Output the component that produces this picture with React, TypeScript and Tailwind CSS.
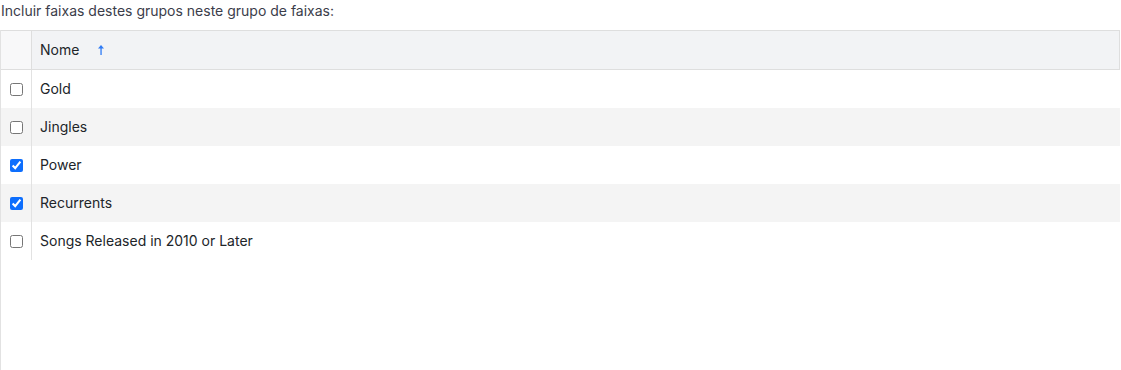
import { useState } from "react";

const groups = [
  { name: "Gold", checked: false },
  { name: "Jingles", checked: false },
  { name: "Power", checked: true },
  { name: "Recurrents", checked: true },
  { name: "Songs Released in 2010 or Later", checked: false },
];

function SortArrow() {
  return (
    <svg width="8" height="12" viewBox="0 0 8 12" className="ml-[18px]">
      <path d="M4 1 L7 4.5 H1 Z" fill="#2f7bf5" />
      <rect x="3.4" y="4" width="1.3" height="7" fill="#2f7bf5" />
    </svg>
  );
}

export default function App() {
  const [rows, setRows] = useState(groups);
  return (
    <div
      className="w-[1121px] h-[370px] bg-white text-[14px] text-[#212529]"
      style={{ fontFamily: "Inter, 'Noto Sans', sans-serif" }}
    >
      <div className="h-[30px] leading-[22px] pl-[1px] text-[#3b3d4a]">
        Incluir faixas destes grupos neste grupo de faixas:
      </div>
      <div className="h-[340px] border-l border-[#e2e2e2] w-[1120px]">
        <div className="flex h-[40px] border-y border-r border-[#dedede] bg-[#f2f3f5]">
          <div className="w-[31px] border-r border-[#dedede] bg-[#f8f8f9]" />
          <div className="flex items-center pl-[8px] pb-[1px]">
            <span>Nome</span>
            <SortArrow />
          </div>
        </div>
        {rows.map((row, idx) => (
          <div
            key={row.name}
            className={
              "flex h-[38px] w-[1119px] " +
              (idx % 2 === 1 ? "bg-[#f4f4f4]" : "bg-white")
            }
          >
            <div className="w-[31px] flex items-center justify-center border-r border-[#e2e2e2]">
              <input
                type="checkbox"
                checked={row.checked}
                className="w-[13px] h-[13px] accent-[#0d6efd] m-0"
                onChange={() =>
                  setRows(
                    rows.map((r, i) =>
                      i === idx ? { ...r, checked: !r.checked } : r,
                    ),
                  )
                }
              />
            </div>
            <div className="flex items-center pl-[8px] pb-[1px]">{row.name}</div>
          </div>
        ))}
      </div>
    </div>
  );
}
